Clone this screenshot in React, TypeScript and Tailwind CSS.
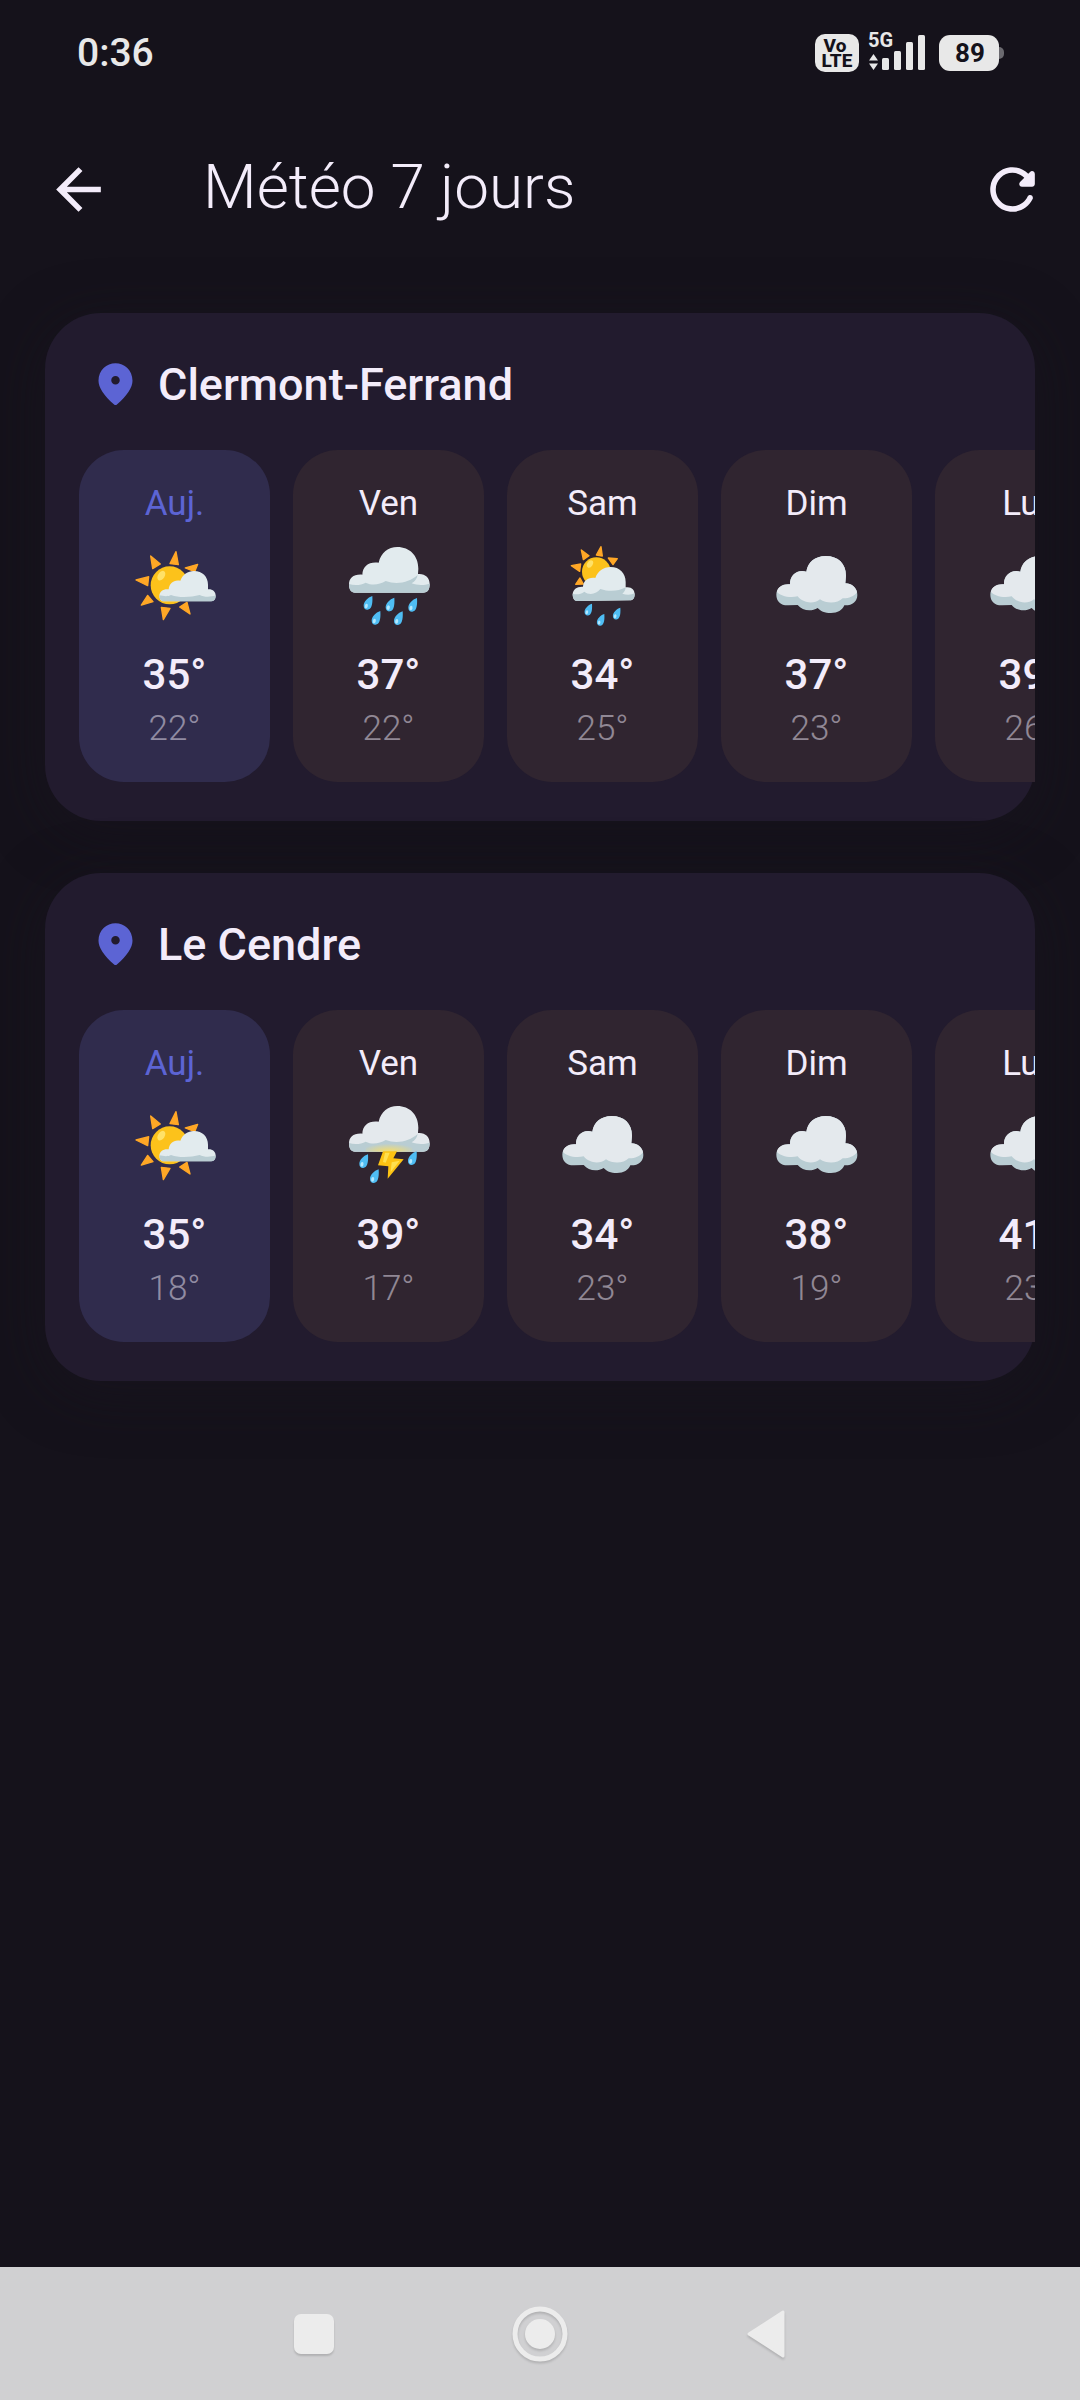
type Weather = "partly" | "rain" | "sunRain" | "cloud" | "storm";

interface Day {
  label: string;
  weather: Weather;
  high: number;
  low: number;
}

interface City {
  name: string;
  days: Day[];
}

const cities: City[] = [
  {
    name: "Clermont-Ferrand",
    days: [
      { label: "Auj.", weather: "partly", high: 35, low: 22 },
      { label: "Ven", weather: "rain", high: 37, low: 22 },
      { label: "Sam", weather: "sunRain", high: 34, low: 25 },
      { label: "Dim", weather: "cloud", high: 37, low: 23 },
      { label: "Lun", weather: "cloud", high: 39, low: 26 },
    ],
  },
  {
    name: "Le Cendre",
    days: [
      { label: "Auj.", weather: "partly", high: 35, low: 18 },
      { label: "Ven", weather: "storm", high: 39, low: 17 },
      { label: "Sam", weather: "cloud", high: 34, low: 23 },
      { label: "Dim", weather: "cloud", high: 38, low: 19 },
      { label: "Lun", weather: "cloud", high: 41, low: 23 },
    ],
  },
];

const Drop = ({ x, y, scale = 1 }: { x: number; y: number; scale?: number }) => (
  <g transform={`translate(${x} ${y}) scale(${scale})`}>
    <path d="M0 0C-14 4-26 18-26 29c0 9 6 13 12 12C-4 40 2 28 0 0Z" fill="#4fbdf3" />
    <ellipse cx="-18" cy="30" rx="4.5" ry="7" fill="#b3e8ff" transform="rotate(12 -18 30)" />
  </g>
);

const Rays = ({ d }: { d: string }) => (
  <path d={d} fill="#ffa726" stroke="#ffa726" strokeWidth="4" strokeLinejoin="round" />
);

const wideCloud =
  "M58 188C46 188 40 179 40 163C40 145 53 132 80 134C81 108 100 94 129 98C136 68 158 51 185 51C222 51 248 77 248 116L247 132C268 130 282 143 282 162C282 179 276 188 262 188Z";
const wideShade =
  "M40 162C56 167 76 166 90 158C110 168 132 164 150 153C185 166 222 156 246 135C244 145 238 154 228 160C246 167 266 166 282 161C282 179 276 188 262 188H58C46 188 40 179 40 162Z";

const PartlyIcon = () => (
  <svg viewBox="37 39 252 252" className="size-[84px]" aria-hidden="true">
    <Rays d="M166 65L148 101L173 104ZM90 78L96 116L119 102ZM46 150L84 140L81 167ZM62 225L81 196L97 215ZM128 269L122 232L148 235ZM208 252L177 231L199 217ZM231 103L194 114L222 125Z" />
    <circle cx="147" cy="166" r="57" fill="#fcc21b" />
    <ellipse cx="122" cy="137" rx="10" ry="16" fill="#ffe168" transform="rotate(32 122 137)" />
    <path d="M130 214C121 214 116 207 116 197C117 184 128 176 144 178C146 160 159 148 179 152C186 134 201 123 220 123C245 123 262 140 262 164V178C276 177 285 185 285 197C285 208 280 214 270 214Z" fill="#e2ebee" />
    <path d="M116 196C130 199 142 200 151 195C176 204 210 202 237 195C250 202 270 202 285 196C285 208 280 214 270 214H130C121 214 116 207 116 196Z" fill="#b9cdd3" />
  </svg>
);

const RainIcon = () => (
  <svg viewBox="34 39 252 252" className="size-[84px]" aria-hidden="true">
    <path d={wideCloud} fill="#e2ebee" />
    <path d={wideShade} fill="#b9cdd3" />
    <Drop x={110} y={198} />
    <Drop x={176} y={203} />
    <Drop x={244} y={204} />
    <Drop x={134} y={243} />
    <Drop x={201} y={244} />
  </svg>
);

const SunRainIcon = () => (
  <svg viewBox="31 39 252 252" className="size-[84px]" aria-hidden="true">
    <Rays d="M151 50L137 75L155 78ZM92 60L98 89L115 77ZM62 107L90 102L87 124ZM75 163L88 144L98 162ZM200 86L173 84L187 104Z" />
    <circle cx="137" cy="125" r="43" fill="#fcc21b" />
    <ellipse cx="118" cy="102" rx="8" ry="12" fill="#ffe168" transform="rotate(32 118 102)" />
    <path d="M80 213C70 213 66 204 66 193C67 178 78 169 97 170C98 152 112 141 134 144C141 124 158 111 180 111C207 111 225 130 225 156V172C242 169 252 179 252 193C252 205 247 211 238 211Z" fill="#e2ebee" />
    <path d="M66 191C78 194 90 193 101 185C116 197 138 192 149 177C176 186 203 184 225 172C225 180 220 187 215 191C228 196 242 195 252 190C252 205 247 211 238 211L80 213C70 213 66 204 66 191Z" fill="#b9cdd3" />
    <Drop x={124} y={221} scale={0.86} />
    <Drop x={161} y={252} scale={0.86} />
    <Drop x={209} y={233} scale={0.86} />
  </svg>
);

const CloudIcon = () => (
  <svg viewBox="0 0 252 252" className="size-[84px]" aria-hidden="true">
    <path d="M40 187C18 188 4 175 4 155C4 136 20 122 45 124C44 98 66 78 94 86C98 58 120 39 152 39C190 39 213 62 213 98L211 121C233 122 247 136 247 156C247 176 232 188 208 187C202 202 188 210 168 210C149 210 136 204 128 195C108 207 82 203 68 186Z" fill="#b9cdd3" />
    <path d="M6 147C8 132 23 122 45 124C44 98 66 78 94 86C98 58 120 39 152 39C190 39 213 62 213 98L211 121C230 122 243 132 246 148C236 161 219 167 203 166C188 182 155 183 135 169C115 185 84 180 68 160C42 166 15 158 6 147Z" fill="#e4e9ed" />
  </svg>
);

const StormIcon = () => (
  <svg viewBox="34 39 252 252" className="size-[84px]" aria-hidden="true">
    <defs>
      <radialGradient id="glow" cx="0.5" cy="1" r="0.6">
        <stop offset="0" stopColor="#ffdf5a" stopOpacity="0.9" />
        <stop offset="1" stopColor="#ffdf5a" stopOpacity="0" />
      </radialGradient>
    </defs>
    <g transform="translate(0 -3)">
      <path d={wideCloud} fill="#e4e9ed" />
      <path d={wideShade} fill="#b9cdd3" />
    </g>
    <rect x="90" y="145" width="140" height="40" fill="url(#glow)" />
    <path d="M142 184L127 226L158 229L156 266L204 208L173 205L184 184Z" fill="#fdc313" />
    <path d="M148 188L142 216L150 218L162 188ZM168 217L165 246L192 212Z" fill="#ffe04f" />
    <Drop x={97} y={193} />
    <Drop x={129} y={238} />
    <Drop x={243} y={184} />
  </svg>
);

const icons = {
  partly: PartlyIcon,
  rain: RainIcon,
  sunRain: SunRainIcon,
  cloud: CloudIcon,
  storm: StormIcon,
};

const StatusBar = () => (
  <div className="flex h-[106px] items-center justify-between pl-[77px] pr-[76px] text-[#e8e8e8]">
    <span className="pt-px text-[39px] leading-none font-medium">0:36</span>
    <div className="flex items-center gap-[9px]">
      <div className="flex h-[38px] w-11 flex-col items-center justify-center rounded-[10px] bg-[#e8e8e8] text-[19px] leading-[15px] font-extrabold text-[#14121b]">
        <span className="pr-1">Vo</span>
        <span>LTE</span>
      </div>
      <div className="relative h-[38px] w-[58px]">
        <span className="absolute -top-1 left-0 text-[20px] leading-[20px] font-bold">5G</span>
        <svg viewBox="0 0 58 38" className="h-[38px] w-[58px]" fill="currentColor" aria-hidden="true">
          <path d="M5.500 20L10 26.500H1ZM1 29.500H10L5.500 36Z" />
          <rect x="14" y="24" width="7" height="12" rx="1.500" />
          <rect x="26" y="17" width="7" height="19" rx="1.500" />
          <rect x="38" y="8" width="7" height="28" rx="1.500" />
          <rect x="50" y="1" width="7" height="35" rx="1.500" />
        </svg>
      </div>
      <div className="ml-1 flex items-center">
        <div className="flex h-9 w-[60px] items-center justify-center rounded-[11px] bg-[#e8e8e8] pl-0.5 text-[26px] leading-none font-bold text-[#14121b]">
          89
        </div>
        <div className="h-3 w-[5px] rounded-r-md bg-[#6b6a70]" />
      </div>
    </div>
  </div>
);

const DayTile = ({ day, today }: { day: Day; today: boolean }) => {
  const Icon = icons[day.weather];
  return (
    <li
      className={`flex w-[191px] shrink-0 flex-col items-center rounded-[45px] pt-[34px] pb-[33px] ${
        today ? "bg-[#302c4d]" : "bg-[#302530]"
      }`}
    >
      <span className={`text-[35px] leading-10 ${today ? "text-[#5c64d4]" : "text-[#f3ecfa]"}`}>{day.label}</span>
      <div className="mt-[19px]">
        <Icon />
      </div>
      <span className="mt-6 text-[42px] leading-[48px] font-medium text-[#f3ecfa]">{day.high}°</span>
      <span className="mt-2.5 text-[35px] leading-10 font-light text-[#f3ecfa]/50">{day.low}°</span>
    </li>
  );
};

const CityCard = ({ city }: { city: City }) => (
  <section className="rounded-[56px] bg-[#221b2e] pt-[41px] pb-[39px] shadow-[0_11px_56px_rgba(26,22,31,0.5)]">
    <div className="flex h-[60px] items-center gap-[17px] pl-[45px]">
      <svg viewBox="0 0 24 24" className="size-[51px] fill-[#5c64d4]" aria-hidden="true">
        <path d="M12 2c-4.200 0-8 3.220-8 8.200 0 3.180 2.450 6.920 7.340 11.230.38.33.95.33 1.330 0C17.550 17.120 20 13.380 20 10.200 20 5.220 16.200 2 12 2zm0 10c-1.100 0-2-.9-2-2s.9-2 2-2 2 .9 2 2-.9 2-2 2z" />
      </svg>
      <h2 className="pt-0.5 text-[45px] leading-[60px] font-medium text-[#f3ecfa]">{city.name}</h2>
    </div>
    <ul className="mt-9 flex gap-[23px] overflow-x-auto pl-[34px] [scrollbar-width:none]">
      {city.days.map((day, i) => (
        <DayTile key={day.label} day={day} today={i === 0} />
      ))}
    </ul>
  </section>
);

const NavBar = () => (
  <nav className="flex h-[133px] items-center justify-center bg-[#d0d0d2]">
    <button aria-label="Applications récentes" className="flex w-[226px] justify-center">
      <span className="size-10 rounded-[7px] bg-[#ececec] shadow-[0_2px_2px_rgba(0,0,0,0.15)]" />
    </button>
    <button aria-label="Accueil" className="flex w-[226px] justify-center">
      <svg viewBox="0 0 56 56" className="size-14 drop-shadow-[0_2px_1px_rgba(0,0,0,0.15)]">
        <circle cx="28" cy="28" r="25" fill="none" stroke="#ececec" strokeWidth="5" />
        <circle cx="28" cy="28" r="15" fill="#ececec" />
      </svg>
    </button>
    <button aria-label="Retour" className="flex w-[226px] justify-center">
      <svg viewBox="0 0 38 48" className="h-12 w-[38px] drop-shadow-[0_2px_1px_rgba(0,0,0,0.15)]">
        <path d="M2 24L36 2V46Z" fill="#ececec" stroke="#ececec" strokeWidth="3" strokeLinejoin="round" />
      </svg>
    </button>
  </nav>
);

const App = () => {
  return (
    <div className="flex min-h-screen flex-col bg-[#15121b] font-['Roboto',sans-serif]">
      <StatusBar />
      <header className="flex h-[166px] items-center pr-[34px] pl-[45px] text-[#f3ecfa]">
        <button aria-label="Retour">
          <svg viewBox="0 0 24 24" className="size-[67px]" fill="currentColor">
            <path d="M20 11H7.830l5.590-5.590L12 4l-8 8 8 8 1.410-1.410L7.830 13H20v-2z" />
          </svg>
        </button>
        <h1 className="ml-[91px] flex-1 pb-1 text-[62px] leading-[80px] font-light">Météo 7 jours</h1>
        <button aria-label="Actualiser">
          <svg viewBox="0 0 24 24" className="size-[67px]" fill="currentColor">
            <path d="M17.650 6.350c-1.630-1.630-3.940-2.570-6.480-2.310-3.670.37-6.690 3.350-7.100 7.020C3.520 15.910 7.270 20 12 20c3.190 0 5.930-1.870 7.210-4.560.32-.67-.16-1.440-.9-1.440-.37 0-.72.2-.88.53-1.130 2.430-3.840 3.970-6.800 3.310-2.220-.49-4.010-2.300-4.480-4.520C5.310 9.440 8.260 6 12 6c1.660 0 3.140.69 4.220 1.780l-1.510 1.510c-.63.63-.19 1.710.7 1.710H19c.55 0 1-.45 1-1V6.410c0-.89-1.080-1.340-1.710-.71l-.64.65z" />
          </svg>
        </button>
      </header>
      <main className="flex flex-1 flex-col gap-[52px] px-[45px] pt-[41px]">
        {cities.map((city) => (
          <CityCard key={city.name} city={city} />
        ))}
      </main>
      <NavBar />
    </div>
  );
};

export default App;
